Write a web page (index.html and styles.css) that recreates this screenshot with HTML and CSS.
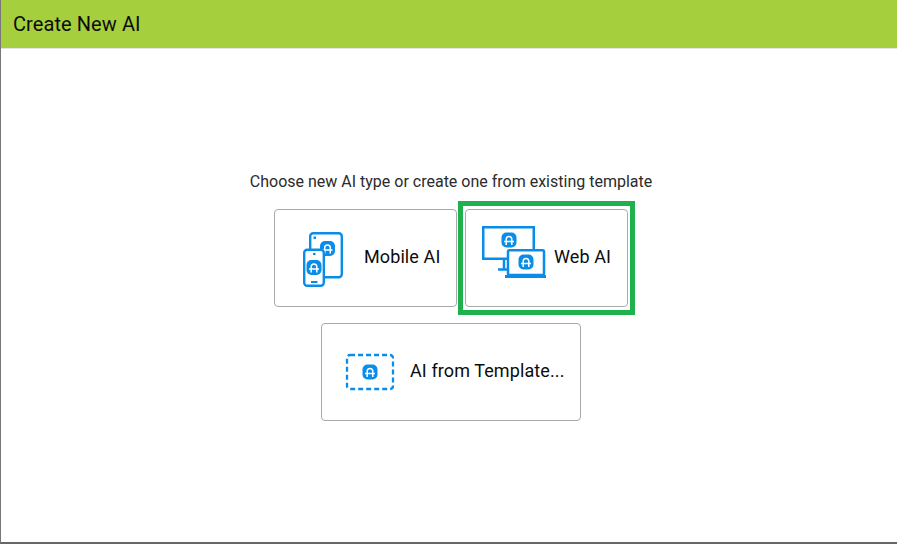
FILE: index.html
```html
<!DOCTYPE html>
<html lang="en">
<head>
<meta charset="utf-8">
<title>Create New AI</title>
<link rel="stylesheet" href="styles.css">
</head>
<body>
<svg class="defs" width="0" height="0" aria-hidden="true">
  <symbol id="badge" viewBox="-8 -8 16 16">
    <rect x="-7.500" y="-7.500" width="15" height="15" rx="5" fill="#0a8de9"/>
    <path d="M-2.800 5V-.8a2.800 2.800 0 0 1 5.600 0V5M-5 1.500H5" fill="none" stroke="#fff" stroke-width="1.500"/>
  </symbol>
</svg>
<main class="dialog">
  <header class="dialog-header">Create New AI</header>
  <section class="dialog-body">
    <p class="prompt">Choose new AI type or create one from existing template</p>
    <div class="choices">
      <button class="choice choice-mobile" type="button">
        <svg class="icon icon-mobile" width="42" height="56" viewBox="0 0 42 56">
          <rect x="8.200" y="1.200" width="31.600" height="44.100" rx="3" fill="#fff" stroke="#0a8de9" stroke-width="2.400"/>
          <rect x="11.500" y="4.500" width="2.500" height="2.500" fill="#0a8de9"/>
          <use href="#badge" x="17.500" y="8.500" width="16" height="16"/>
          <rect x="2.200" y="17.700" width="19.600" height="36.100" rx="3" fill="#fff" stroke="#0a8de9" stroke-width="2.400"/>
          <rect x="11" y="21" width="2.500" height="2" fill="#0a8de9"/>
          <use href="#badge" x="4" y="27.500" width="16" height="16"/>
          <rect x="9" y="49" width="6.500" height="2" fill="#0a8de9"/>
        </svg>
        <span>Mobile AI</span>
      </button>
      <button class="choice choice-web is-selected" type="button">
        <svg class="icon icon-web" width="66" height="56" viewBox="0 0 66 56">
          <rect x="2.250" y="2.250" width="50.500" height="31.500" fill="#fff" stroke="#0a8de9" stroke-width="2.500"/>
          <path d="M23 34V44.500M17 44.500H26" fill="none" stroke="#0a8de9" stroke-width="2.500"/>
          <use href="#badge" x="20" y="7" width="16" height="16"/>
          <rect x="27" y="25.250" width="36" height="24.750" rx="1.500" fill="#fff" stroke="#0a8de9" stroke-width="2.500"/>
          <rect x="24" y="50" width="41" height="3" fill="#0a8de9"/>
          <use href="#badge" x="37" y="29" width="16" height="16"/>
        </svg>
        <span>Web AI</span>
      </button>
      <button class="choice choice-template" type="button">
        <svg class="icon icon-template" width="50" height="38" viewBox="0 0 50 38">
          <rect x="2" y="2" width="46" height="34" rx="3" fill="none" stroke="#0a8de9" stroke-width="2.300" stroke-dasharray="5 3"/>
          <use href="#badge" x="17" y="11" width="16" height="16"/>
        </svg>
        <span>AI from Template...</span>
      </button>
    </div>
  </section>
</main>
</body>
</html>
```

FILE: styles.css
```css
* {
  box-sizing: border-box;
}

html,
body {
  height: 100%;
  margin: 0;
}

body {
  background: #fff;
  color: #111;
  font-family: Roboto, "Liberation Sans", sans-serif;
  overflow: hidden;
}

.defs {
  display: block;
  height: 0;
  position: absolute;
}

.dialog {
  border-bottom: 2px solid #666;
  border-left: 1px solid #777;
  display: flex;
  flex-direction: column;
  height: 544px;
}

.dialog-header {
  background: #a5cf3d;
  border-bottom: 1px solid #e4e4e4;
  color: #0c0c0c;
  font-size: 20px;
  height: 49px;
  letter-spacing: 0.08px;
  line-height: 48px;
  padding-left: 12px;
}

.dialog-body {
  align-items: center;
  display: flex;
  flex-direction: column;
  padding: 123px 0 0 4px;
}

.prompt {
  color: #2b2b2b;
  font-size: 16px;
  line-height: 20px;
  margin: 0 0 17px;
}

.choices {
  display: flex;
  flex-wrap: wrap;
  gap: 16px 8px;
  justify-content: center;
  width: 420px;
}

.choice {
  align-items: center;
  background: #fff;
  border: 1px solid #aaa;
  border-radius: 4px;
  color: #0c0c0c;
  display: flex;
  font-family: inherit;
  font-size: 18px;
  height: 98px;
  letter-spacing: 0.1px;
  line-height: 24px;
  padding: 0 0 3px;
  position: relative;
}

.choice-mobile {
  padding-left: 27px;
  width: 183px;
}

.choice-mobile .icon {
  margin-right: 20px;
  margin-top: 7px;
}

.choice-web {
  padding-left: 15px;
  width: 163px;
}

.choice-web .icon {
  margin-bottom: 7px;
  margin-right: 7px;
}

.choice-template {
  padding-left: 23px;
  width: 260px;
}

.choice-template .icon {
  margin-right: 15px;
  margin-top: 3px;
}

.icon {
  flex: none;
}

.is-selected::after {
  border: 5px solid #1fb14c;
  bottom: -9px;
  content: "";
  left: -8px;
  pointer-events: none;
  position: absolute;
  right: -8px;
  top: -9px;
}
```
